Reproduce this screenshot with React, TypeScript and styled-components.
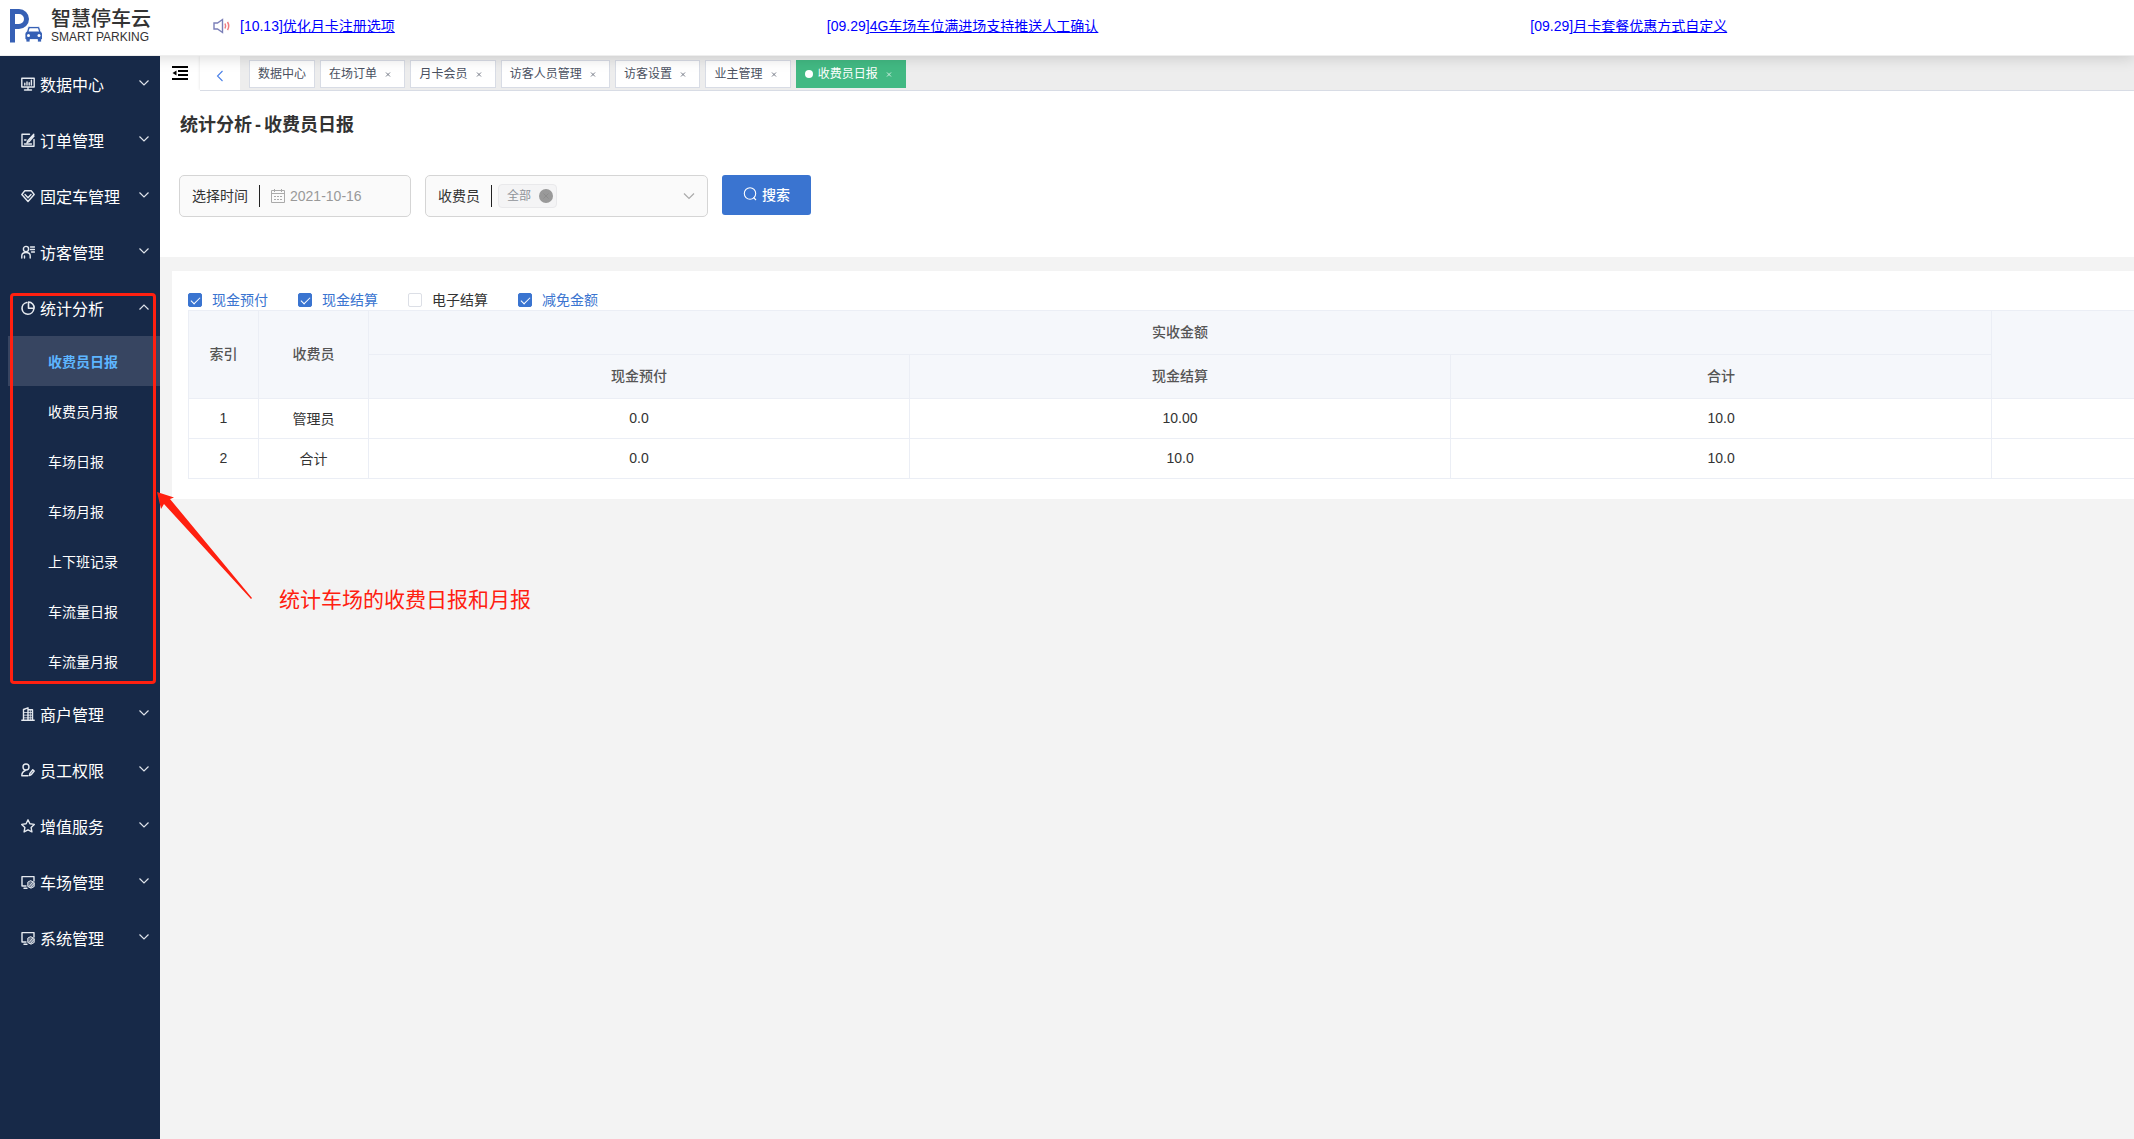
import React, { useState } from "react";
import styled, { createGlobalStyle, css } from "styled-components";

const GlobalStyle = createGlobalStyle`
  * { box-sizing: border-box; }
  body {
    margin: 0;
    background: #f3f3f3;
    color: #333;
    font-family: "Liberation Sans", "Noto Sans CJK SC", sans-serif;
    font-size: 14px;
    overflow-x: hidden;
  }
  button, input, select { font: inherit; }
`;

const Page = styled.div`
  position: relative;
  display: flex;
  flex-direction: column;
  min-height: 100vh;
  overflow: hidden;
`;

/* ---------- header ---------- */

const Header = styled.header`
  position: relative;
  z-index: 2;
  display: flex;
  align-items: center;
  flex-shrink: 0;
  height: 56px;
  padding-bottom: 4px;
  background: #fff;
  border-bottom: 1px solid #eee;
  box-shadow: 0 2px 14px rgba(0, 0, 0, 0.15);
`;

const Brand = styled.div`
  display: flex;
  align-items: center;
  gap: 9px;
  width: 213px;
  flex-shrink: 0;
  padding-left: 9px;
`;

const BrandText = styled.div`
  display: flex;
  flex-direction: column;
  color: #333;
  white-space: nowrap;
`;

const BrandName = styled.span`
  font-size: 20px;
  line-height: 22px;
  font-weight: 500;
`;

const BrandSub = styled.span`
  font-size: 12px;
  line-height: 14px;
`;

const Notices = styled.nav`
  display: flex;
  flex: 1;
  min-width: 0;
  gap: 432px;
  margin-left: 9px;
  overflow: hidden;
  white-space: nowrap;
`;

const NoticeLink = styled.a`
  color: #00f;
  line-height: 20px;
  text-decoration: none;
`;

/* ---------- sidebar ---------- */

const Body = styled.div`
  display: flex;
  flex: 1;
`;

const Sidebar = styled.nav`
  width: 160px;
  flex-shrink: 0;
  background: #172948;
  position: relative;
  z-index: 3;
`;

const MenuButton = styled.button`
  display: flex;
  align-items: center;
  width: 100%;
  height: 56px;
  padding: 0 10px 0 21px;
  border: 0;
  background: none;
  color: #fff;
  font-size: 16px;
  gap: 5px;
  cursor: pointer;
`;

const MenuLabel = styled.span`
  flex: 1;
  text-align: left;
  white-space: nowrap;
`;

const Chevron = styled.svg<{ $up?: boolean }>`
  width: 12px;
  height: 12px;
  margin-bottom: 3px;
  fill: none;
  stroke: #dfe3ea;
  ${(p) => p.$up && css`transform: rotate(180deg);`}
`;

const SubMenu = styled.div`
  padding-left: 8px;
`;

const SubLink = styled.a<{ $active?: boolean }>`
  display: block;
  height: 50px;
  padding-left: 40px;
  line-height: 52px;
  color: ${(p) => (p.$active ? "#5db5ff" : "#fff")};
  font-weight: ${(p) => (p.$active ? 700 : 400)};
  background: ${(p) => (p.$active ? "#374561" : "transparent")};
  text-decoration: none;
`;

/* ---------- tabs ---------- */

const Main = styled.main`
  flex: 1;
  min-width: 0;
`;

const TabBar = styled.div`
  display: flex;
  height: 35px;
  background: #fff;
`;

const FoldButton = styled.button`
  display: grid;
  place-items: start center;
  width: 40px;
  padding: 10px 0 0;
  border: 0;
  background: #fff;
`;

const Strip = styled.div`
  display: flex;
  flex: 1;
  min-width: 0;
  background: #ededed;
  border-bottom: 1px solid #d8dce5;
`;

const BackButton = styled.button`
  display: grid;
  place-items: center;
  width: 40px;
  padding: 5px 0 0;
  border: 0;
  background: #fff;
  box-shadow: 0 0 3px rgba(0, 0, 0, 0.12);
  clip-path: inset(0 0 0 -4px);
`;

const Tabs = styled.div`
  display: flex;
  gap: 5px;
  padding: 4px 9px 0;
  white-space: nowrap;
`;

const Tab = styled.div<{ $active?: boolean }>`
  height: 28px;
  padding: 0 8px;
  border: 1px solid ${(p) => (p.$active ? "#42b983" : "#d8dce5")};
  background: ${(p) => (p.$active ? "#42b983" : "#fff")};
  color: ${(p) => (p.$active ? "#fff" : "#495060")};
  font-size: 12px;
  line-height: 27px;
`;

const Dot = styled.span`
  display: inline-block;
  width: 8px;
  height: 8px;
  margin-right: 5px;
  border-radius: 50%;
  background: #fff;
`;

const CloseButton = styled.button`
  width: 16px;
  height: 16px;
  padding: 0;
  border: 0;
  background: none;
  color: inherit;
  opacity: 0.75;
  line-height: 1;
  vertical-align: middle;
`;

/* ---------- filters ---------- */

const FilterPanel = styled.section`
  height: 166px;
  padding: 21px 19px 0;
  background: #fff;
`;

const Title = styled.h1`
  margin: 0;
  padding-left: 1px;
  color: #333;
  font-size: 18px;
  line-height: 26px;
  font-weight: 700;
`;

const Hyphen = styled.span`
  padding: 0 3px;
`;

const Filters = styled.form`
  display: flex;
  align-items: flex-start;
  gap: 14px;
  margin-top: 37px;
`;

const Field = styled.div<{ $wide?: boolean }>`
  position: relative;
  display: flex;
  align-items: center;
  width: ${(p) => (p.$wide ? 283 : 232)}px;
  height: 42px;
  padding-left: 12px;
  border: 1px solid #d5d5d5;
  border-radius: 5px;
  background: #fafafa;
`;

const FieldLabel = styled.label`
  padding-right: 11px;
  border-right: 1px solid #222;
  color: #333;
  line-height: 22px;
  white-space: nowrap;
`;

const DateIcon = styled.svg`
  width: 14px;
  height: 14px;
  margin: 0 5px 0 11px;
  flex-shrink: 0;
`;

const DateInput = styled.input`
  flex: 1;
  min-width: 0;
  padding: 0;
  border: 0;
  outline: 0;
  background: transparent;
  color: #999;
`;

const Tag = styled.span`
  display: flex;
  align-items: center;
  gap: 8px;
  height: 24px;
  margin-left: 6px;
  padding: 0 3px 0 8px;
  border: 1px solid #e9e9eb;
  border-radius: 4px;
  background: #f4f4f5;
  color: #909399;
  font-size: 12px;
  line-height: 20px;
`;

const TagClose = styled.button`
  display: grid;
  place-items: center;
  width: 14px;
  height: 14px;
  padding: 0;
  border: 0;
  border-radius: 50%;
  background: #999;
  color: #8c8c8c;
`;

const Picker = styled.select`
  flex: 1;
  min-width: 0;
  height: 40px;
  border: 0;
  outline: 0;
  appearance: none;
  background: transparent;
`;

const PickerArrow = styled.svg`
  position: absolute;
  right: 11px;
  top: 14px;
  width: 14px;
  height: 12px;
  fill: none;
  stroke: #aaa;
  pointer-events: none;
`;

const SearchButton = styled.button`
  display: flex;
  align-items: center;
  justify-content: center;
  gap: 5px;
  width: 89px;
  height: 40px;
  padding: 0 0 2px;
  border: 0;
  border-radius: 3px;
  background: #3a74d0;
  color: #fff;
  font-weight: 500;
`;

/* ---------- report ---------- */

const Report = styled.section`
  margin: 14px 0 0 12px;
  padding: 20px 0 20px 16px;
  background: #fff;
  overflow: hidden;
`;

const Options = styled.div`
  display: flex;
  gap: 30px;
  height: 19px;
`;

const Option = styled.label<{ $on: boolean }>`
  display: flex;
  align-items: center;
  gap: 10px;
  height: 18px;
  line-height: 18px;
  color: ${(p) => (p.$on ? "#3a74d0" : "#333")};
`;

const Tick = styled.input`
  position: relative;
  width: 14px;
  height: 14px;
  margin: 0;
  appearance: none;
  border: 1px solid #dcdfe6;
  border-radius: 2px;
  background: #fff;

  &:checked {
    border-color: #3a74d0;
    background: #3a74d0;
  }
  &:checked::after {
    content: "";
    position: absolute;
    left: 4px;
    top: 1px;
    width: 4px;
    height: 8px;
    border: solid #fff;
    border-width: 0 1px 1px 0;
    transform: rotate(45deg);
  }
`;

const Table = styled.table`
  width: calc(120% + 10px);
  table-layout: fixed;
  border-collapse: collapse;
  text-align: center;
`;

const Col = styled.col<{ $w?: number }>`
  ${(p) => p.$w && css`width: ${p.$w}px;`}
`;

const Th = styled.th`
  height: 44px;
  padding: 0 0 3px;
  border: 1px solid #ebeef5;
  background: #f5f7fb;
  color: #555;
  font-weight: 500;
`;

const Td = styled.td`
  height: 40px;
  padding: 0 0 2px;
  border: 1px solid #ebeef5;
`;

/* ---------- annotation over the page ---------- */

const Highlight = styled.div`
  position: absolute;
  z-index: 4;
  left: 10px;
  top: 293px;
  width: 146px;
  height: 391px;
  border: 3px solid #ff2010;
  border-radius: 4px;
  pointer-events: none;
`;

const Arrow = styled.svg`
  position: absolute;
  z-index: 4;
  left: 156px;
  top: 490px;
  width: 98px;
  height: 112px;
  pointer-events: none;
`;

const Note = styled.p`
  position: absolute;
  z-index: 4;
  left: 279px;
  top: 585px;
  margin: 0;
  color: #ff2010;
  font-size: 21px;
  line-height: 30px;
  white-space: nowrap;
`;

/* ---------- icons ---------- */

const MenuSvg = styled.svg`
  width: 14px;
  height: 14px;
  flex-shrink: 0;
  fill: none;
  stroke: #e6eaf0;
  stroke-width: 1.4;
  stroke-linecap: round;
  stroke-linejoin: round;
`;

const screenGear = (
  <>
    <path d="M5 11H1V1.600h12V6M3 13.300h3" />
    <path d="M10 5.800l3.200 1.700v4L10 13.200l-3.200-1.700v-4z" fill="#e6eaf0" fillOpacity=".4" strokeWidth="1" />
    <path d="M8 11.500l3.500-4M9.500 12.500l3.500-4" strokeWidth=".9" />
  </>
);

const icons: Record<string, React.ReactNode> = {
  data: (
    <>
      <path d="M.8 1.200h12.400v8.800H.8zM7 10v2.500M3.500 13h7" />
      <path d="M3.800 8V6.300M6 8V5M8.200 8V5.800M10.400 8V3.300" />
    </>
  ),
  order: (
    <>
      <path d="M8.500 1.200H1v12h12V6.500" />
      <path d="M12.800 1.200L7 7.500l-1 2 2-.8 5-5.700M3.500 7h1.500M3.500 11h7" />
    </>
  ),
  gem: (
    <>
      <path d="M3.800 1.800h6.400L13.200 5.500 7 12.500.8 5.500z" />
      <path d="M4 5.500l3 3.200 3-3.200" />
    </>
  ),
  visitor: (
    <>
      <circle cx="5" cy="4" r="2.600" />
      <path d="M.8 13V11c0-2 1.500-3.500 4.200-3.500S9.200 9 9.200 11v2M3.500 13v-2M9.500 2h4M9.500 4.500h4M10.500 7h3" />
    </>
  ),
  chart: (
    <>
      <path d="M5.800 1.500A5.900 5.900 0 1 0 12.800 8" strokeWidth="1.600" />
      <path d="M7.500 1a5.800 5.800 0 0 1 5.600 6.300H7.500z" strokeWidth="1.600" />
    </>
  ),
  shop: (
    <>
      <path d="M2.500 12.800V2.500L7 .8v12M7 2.800h4.500v10M.8 13.200h12.400" />
      <path d="M2.500 5.500H7M2.500 8.200H7M2.500 10.800H7M7 5.500h4.500M7 8.200h4.500M7 10.800h4.500M9.300 3v10" strokeWidth=".8" />
    </>
  ),
  staff: (
    <>
      <circle cx="5" cy="4" r="3" />
      <path d="M7 12.800H.8c0-3 1.500-4.600 3.500-5.300M8.500 12.500l.3-2 3-3.700 1.400 1.200-3 3.700z" />
    </>
  ),
  star: <path d="M7 .8l1.900 4 4.400.6-3.200 3 .8 4.500L7 10.800l-3.900 2.100.8-4.500-3.200-3 4.400-.6z" />,
  lot: screenGear,
  system: screenGear,
};

const MenuIcon = ({ name }: { name: string }) => (
  <MenuSvg viewBox="0 0 14 14" aria-hidden="true">{icons[name]}</MenuSvg>
);

const Logo = () => (
  <svg width="33" height="36" viewBox="0 0 33 36" aria-hidden="true">
    <path d="M3.500 34.500V3.500H10a7.500 7.500 0 0 1 0 15H3.500" fill="none" stroke="#3660b5" strokeWidth="5" />
    <path
      d="M20.500 18.500h8.500c1 0 1.500.5 1.800 1.300l1 3.700c1 .6 1.700 1.500 1.700 2.800v5.200h-1v2.500h-4v-2.500h-7.500v2.500h-4v-2.500h-1v-5.200c0-1.300.6-2.200 1.700-2.800l1-3.700c.3-.8.800-1.300 1.800-1.300z"
      fill="#3660b5"
      stroke="#fff"
      strokeWidth=".8"
    />
    <path d="M20.600 20.200h8.400l1 3.200H19.500z" fill="#fff" />
    <circle cx="19.500" cy="27.500" r="1.500" fill="#fff" />
    <circle cx="30" cy="27.500" r="1.500" fill="#fff" />
  </svg>
);

const Speaker = () => (
  <svg width="18" height="16" viewBox="0 0 18 16" fill="none" aria-hidden="true">
    <path d="M1 5h3.500L9.500 1.500v13L4.500 11H1z" stroke="#7b7fb8" strokeWidth="1.400" />
    <path d="M12 5.500q1.300 2.500 0 5M14.500 4q2.400 4 0 8" stroke="#f07b80" strokeWidth="1.500" />
  </svg>
);

/* ---------- data ---------- */

const notices = [
  ["[10.13]", "优化月卡注册选项"],
  ["[09.29]", "4G车场车位满进场支持推送人工确认"],
  ["[09.29]", "月卡套餐优惠方式自定义"],
];

const reports = ["收费员日报", "收费员月报", "车场日报", "车场月报", "上下班记录", "车流量日报", "车流量月报"];

const menu: { icon: string; label: string; items?: string[] }[] = [
  { icon: "data", label: "数据中心" },
  { icon: "order", label: "订单管理" },
  { icon: "gem", label: "固定车管理" },
  { icon: "visitor", label: "访客管理" },
  { icon: "chart", label: "统计分析", items: reports },
  { icon: "shop", label: "商户管理" },
  { icon: "staff", label: "员工权限" },
  { icon: "star", label: "增值服务" },
  { icon: "lot", label: "车场管理" },
  { icon: "system", label: "系统管理" },
];

const tabs = ["数据中心", "在场订单", "月卡会员", "访客人员管理", "访客设置", "业主管理", "收费员日报"];

const rows = [
  ["1", "管理员", "0.0", "10.00", "10.0", ""],
  ["2", "合计", "0.0", "10.0", "10.0", ""],
];

export default function App() {
  const [date, setDate] = useState("2021-10-16");
  const [shown, setShown] = useState<Record<string, boolean>>({
    现金预付: true,
    现金结算: true,
    电子结算: false,
    减免金额: true,
  });

  return (
    <Page>
      <GlobalStyle />
      <Header>
        <Brand>
          <Logo />
          <BrandText>
            <BrandName>智慧停车云</BrandName>
            <BrandSub>SMART PARKING</BrandSub>
          </BrandText>
        </Brand>
        <Speaker />
        <Notices>
          {notices.map(([day, text]) => (
            <NoticeLink href="#" key={text}>
              {day}
              <u>{text}</u>
            </NoticeLink>
          ))}
        </Notices>
      </Header>

      <Body>
        <Sidebar>
          {menu.map(({ icon, label, items }) => (
            <React.Fragment key={label}>
              <MenuButton type="button" aria-expanded={!!items}>
                <MenuIcon name={icon} />
                <MenuLabel>{label}</MenuLabel>
                <Chevron $up={!!items} viewBox="0 0 12 12" aria-hidden="true">
                  <path d="M1.500 3.500L6 8l4.500-4.500" strokeWidth="1.200" />
                </Chevron>
              </MenuButton>
              {items && (
                <SubMenu>
                  {items.map((item, i) => (
                    <SubLink href="#" key={item} $active={i === 0}>{item}</SubLink>
                  ))}
                </SubMenu>
              )}
            </React.Fragment>
          ))}
        </Sidebar>

        <Main>
          <TabBar>
            <FoldButton type="button" aria-label="折叠菜单">
              <svg width="16" height="14" viewBox="0 0 16 14" aria-hidden="true">
                <path d="M0 1h16M6 5h10M6 9h10M0 13h16" stroke="#000" strokeWidth="2" />
                <path d="M4.500 4.500v5L.5 7z" />
              </svg>
            </FoldButton>
            <Strip>
              <BackButton type="button" aria-label="向左滚动">
                <svg width="8" height="12" viewBox="0 0 8 12" fill="none" aria-hidden="true">
                  <path d="M6.500 1L1.500 6l5 5" stroke="#4a80e8" strokeWidth="1.100" />
                </svg>
              </BackButton>
              <Tabs>
                {tabs.map((tab, i) => {
                  const active = i === tabs.length - 1;
                  return (
                    <Tab key={tab} $active={active}>
                      {active && <Dot />}
                      {tab}
                      {i > 0 && " "}
                      {i > 0 && (
                        <CloseButton type="button" aria-label={"关闭" + tab}>
                          <svg width="16" height="16" viewBox="0 0 16 16" aria-hidden="true">
                            <path d="M6 5.500l4 4M10 5.500l-4 4" stroke="currentColor" />
                          </svg>
                        </CloseButton>
                      )}
                    </Tab>
                  );
                })}
              </Tabs>
            </Strip>
          </TabBar>

          <FilterPanel>
            <Title>统计分析<Hyphen>-</Hyphen>收费员日报</Title>
            <Filters onSubmit={(e) => e.preventDefault()}>
              <Field>
                <FieldLabel htmlFor="day">选择时间</FieldLabel>
                <DateIcon viewBox="0 0 14 14" fill="none" stroke="#aaa" aria-hidden="true">
                  <path d="M.5 1.500h13v12H.5zM.5 4.500h13M3.500 0v3M10.500 0v3" />
                  <path d="M3 7.500h8M3 10.500h8" strokeDasharray="2 1" />
                </DateIcon>
                <DateInput id="day" type="text" value={date} onChange={(e) => setDate(e.target.value)} />
              </Field>
              <Field $wide>
                <FieldLabel htmlFor="collector">收费员</FieldLabel>
                <Tag>
                  全部
                  <TagClose type="button" aria-label="移除全部">
                    <svg width="8" height="8" viewBox="0 0 8 8" aria-hidden="true">
                      <path d="M1.500 1.500l5 5M6.500 1.500l-5 5" stroke="currentColor" />
                    </svg>
                  </TagClose>
                </Tag>
                <Picker id="collector">
                  <option value="" />
                </Picker>
                <PickerArrow viewBox="0 0 14 12" aria-hidden="true">
                  <path d="M2 3.500l5 5 5-5" strokeWidth="1.200" />
                </PickerArrow>
              </Field>
              <SearchButton type="submit">
                <svg width="14" height="14" viewBox="0 0 14 14" fill="none" stroke="#fff" aria-hidden="true">
                  <circle cx="7" cy="6.500" r="5.700" strokeWidth="1.100" />
                  <path d="M10.500 10.500l2.500 2.500" strokeWidth="1.100" />
                </svg>
                搜索
              </SearchButton>
            </Filters>
          </FilterPanel>

          <Report>
            <Options>
              {Object.keys(shown).map((name) => (
                <Option key={name} $on={shown[name]}>
                  <Tick
                    type="checkbox"
                    checked={shown[name]}
                    onChange={() => setShown({ ...shown, [name]: !shown[name] })}
                  />
                  {name}
                </Option>
              ))}
            </Options>
            <Table>
              <colgroup>
                <Col $w={70} />
                <Col $w={110} />
                <Col />
                <Col />
                <Col />
                <Col />
              </colgroup>
              <thead>
                <tr>
                  <Th rowSpan={2}>索引</Th>
                  <Th rowSpan={2}>收费员</Th>
                  <Th colSpan={3}>实收金额</Th>
                  <Th rowSpan={2} />
                </tr>
                <tr>
                  <Th>现金预付</Th>
                  <Th>现金结算</Th>
                  <Th>合计</Th>
                </tr>
              </thead>
              <tbody>
                {rows.map((row) => (
                  <tr key={row[0]}>
                    {row.map((cell, i) => (
                      <Td key={i}>{cell}</Td>
                    ))}
                  </tr>
                ))}
              </tbody>
            </Table>
          </Report>
        </Main>
      </Body>

      <Highlight />
      <Arrow viewBox="0 0 98 112" aria-hidden="true">
        <path d="M1 2l17 5.500-4 1.500L96 108l-1 1L8 14l-3 5z" fill="#ff2010" />
      </Arrow>
      <Note>统计车场的收费日报和月报</Note>
    </Page>
  );
}
